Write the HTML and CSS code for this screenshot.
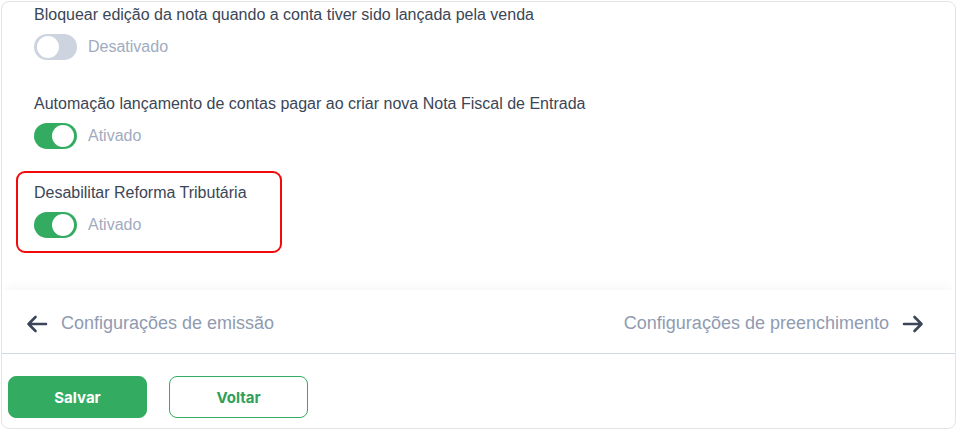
FILE: index.html
```html
<!DOCTYPE html>
<html lang="pt-BR">
<head>
<meta charset="utf-8">
<title>Configurações</title>
<link rel="stylesheet" href="styles.css">
</head>
<body>
<div class="card">
  <div class="scroll">
    <div class="list">
      <div class="item">
        <div class="label">Bloquear edição da nota quando a conta tiver sido lançada pela venda</div>
        <div class="switch-row">
          <span class="switch"><span class="knob"></span></span>
          <span class="state">Desativado</span>
        </div>
      </div>
      <div class="item">
        <div class="label">Automação lançamento de contas pagar ao criar nova Nota Fiscal de Entrada</div>
        <div class="switch-row">
          <span class="switch on"><span class="knob"></span></span>
          <span class="state">Ativado</span>
        </div>
      </div>
      <div class="item highlight">
        <div class="label">Desabilitar Reforma Tributária</div>
        <div class="switch-row">
          <span class="switch on"><span class="knob"></span></span>
          <span class="state">Ativado</span>
        </div>
      </div>
    </div>
  </div>
  <div class="nav">
    <a class="nav-link">
      <svg class="arrow" width="22" height="18" viewBox="0 0 22 18"><path d="M20 9H2.5M9.5 2L2.5 9L9.5 16" fill="none" stroke="#3c4658" stroke-width="2.6" stroke-linecap="round" stroke-linejoin="round"/></svg>
      <span>Configurações de emissão</span>
    </a>
    <a class="nav-link">
      <span>Configurações de preenchimento</span>
      <svg class="arrow" width="22" height="18" viewBox="0 0 22 18"><path d="M2 9H19.5M12.5 2L19.5 9L12.5 16" fill="none" stroke="#3c4658" stroke-width="2.6" stroke-linecap="round" stroke-linejoin="round"/></svg>
    </a>
  </div>
  <div class="footer">
    <button class="btn primary">Salvar</button>
    <button class="btn outline">Voltar</button>
  </div>
</div>
</body>
</html>
```
FILE: styles.css
```css
* { box-sizing: border-box; }
html, body { margin: 0; padding: 0; background: #fff; }
body {
  font-family: "Liberation Sans", Arial, sans-serif;
  padding: 1px;
}
.card {
  height: 428px;
  border: 1px solid #e4e4e4;
  border-radius: 8px;
  overflow: hidden;
  display: flex;
  flex-direction: column;
  background: #fff;
}
.scroll {
  height: 288px;
  overflow: hidden;
  padding: 0 14px;
}
.list {
  margin-top: -9px;
  display: flex;
  flex-direction: column;
  gap: 7px;
  align-items: flex-start;
}
.item {
  border: 2px solid transparent;
  border-radius: 9px;
  padding: 11px 16px 13px;
  width: 266px;
  white-space: nowrap;
}
.item.highlight { border-color: #f00a0a; }
.label {
  font-size: 16px;
  line-height: 18px;
  color: #3b4656;
}
.switch-row {
  display: flex;
  align-items: center;
  gap: 11px;
  margin-top: 10px;
}
.switch {
  width: 43px;
  height: 26px;
  border-radius: 13px;
  background: #cdd4df;
  position: relative;
  display: block;
}
.switch .knob {
  position: absolute;
  top: 2px;
  left: 3px;
  width: 22px;
  height: 22px;
  border-radius: 50%;
  background: #fff;
}
.switch.on { background: #33ac61; }
.switch.on .knob { left: 18px; }
.state {
  font-size: 16px;
  color: #a1abc0;
}
.nav {
  height: 64px;
  display: flex;
  align-items: center;
  justify-content: space-between;
  padding: 4px 31px 0 24px;
  border-bottom: 1px solid #d3d9e1;
  box-shadow: 0 -8px 10px -4px rgba(0, 0, 0, 0.035);
  position: relative;
}
.nav-link {
  display: flex;
  align-items: center;
  gap: 13px;
  font-size: 18px;
  color: #909bb1;
}
.arrow { display: block; }
.footer {
  display: flex;
  gap: 22px;
  padding: 22px 6px 0;
}
.btn {
  width: 139px;
  height: 42px;
  border-radius: 8px;
  font-family: Inter, "Liberation Sans", sans-serif;
  font-weight: 700;
  font-size: 15px;
  cursor: pointer;
}
.btn.primary {
  background: #33ac61;
  border: 1px solid #33ac61;
  color: #fff;
}
.btn.outline {
  background: #fff;
  border: 1px solid #33ac61;
  color: #2f9f59;
}
```
